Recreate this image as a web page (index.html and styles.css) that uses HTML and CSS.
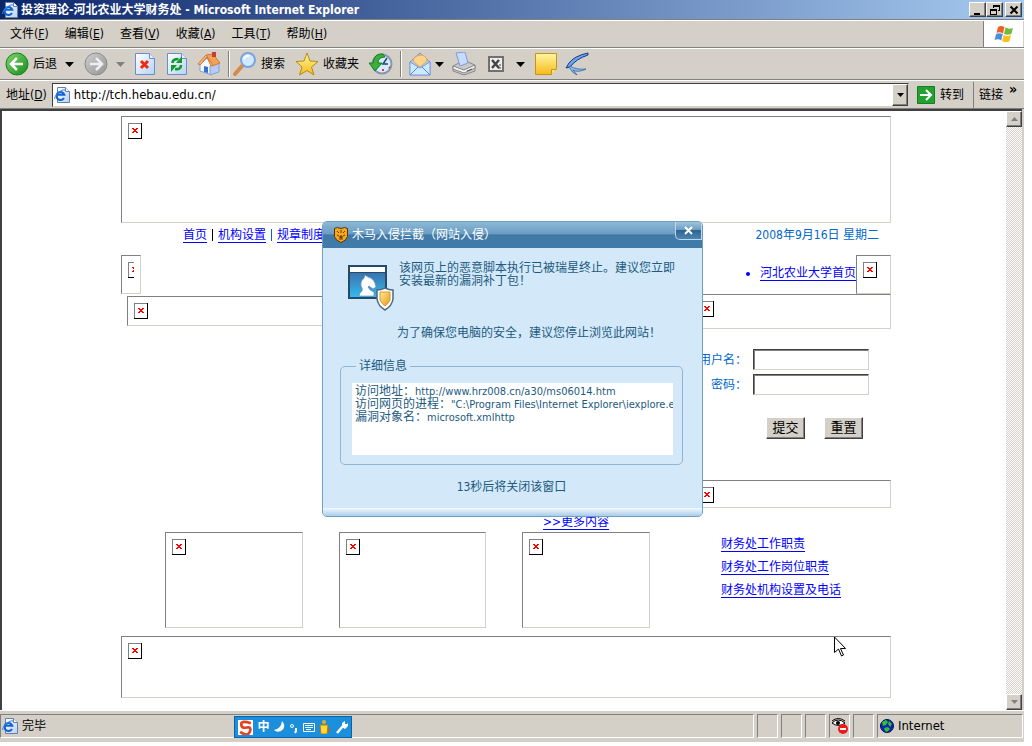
FILE: index.html
```
<!DOCTYPE html>
<html lang="zh-CN">
<head>
  <meta charset="UTF-8">
  <meta name="viewport" content="width=device-width, initial-scale=1.0">
  <title>投资理论-河北农业大学财务处</title>
  <link rel="stylesheet" href="styles.css">
</head>
<body>
  <svg class="defs" width="0" height="0" aria-hidden="true">
    <defs>
      <linearGradient id="green" x1="0" y1="0" x2="1" y2="1"><stop offset="0" stop-color="#7ed86a"/><stop offset="1" stop-color="#178a1c"/></linearGradient>
      <linearGradient id="grey" x1="0" y1="0" x2="1" y2="1"><stop offset="0" stop-color="#cfcfcf"/><stop offset="1" stop-color="#939393"/></linearGradient>
      <linearGradient id="gold" x1="0" y1="0" x2="0" y2="1"><stop offset="0" stop-color="#fff6a0"/><stop offset="1" stop-color="#f5bb1a"/></linearGradient>
      <linearGradient id="amber" x1="0" y1="0" x2="1" y2="1"><stop offset="0" stop-color="#ffe9a0"/><stop offset="1" stop-color="#e59a10"/></linearGradient>
      <linearGradient id="paper" x1="0" y1="0" x2="1" y2="1"><stop offset="0" stop-color="#ffffff"/><stop offset="1" stop-color="#b5d2f8"/></linearGradient>
      <linearGradient id="sky" x1="0" y1="0" x2="0" y2="1"><stop offset="0" stop-color="#3b5f9c"/><stop offset="1" stop-color="#35bdf0"/></linearGradient>
    </defs>
    <symbol id="ie" viewBox="0 0 16 16">
      <path d="M3.500 .5h8l4 4v11h-12z" fill="url(#paper)" stroke="#6a7fa8"/>
      <path d="M11.500 .5v4h4" fill="#fff" stroke="#6a7fa8"/>
      <path d="M10 11a4 4 0 1 1 .3-3.300H3" fill="none" stroke="#1560d4" stroke-width="2"/>
      <path d="M.8 12C-.5 9 8 1.500 11 3" fill="none" stroke="#2a8ce8"/>
    </symbol>
    <symbol id="broken" viewBox="0 0 14 16">
      <path d="M0 0h14v16H0z" fill="#000"/>
      <path d="M0 0h13v15H0z" fill="#808080"/>
      <path d="M1 1h12v14H1z" fill="#fff"/>
      <path d="M4 5h2v1h2V5h2v1H9v1H8v1h1v1h1v1H8V9H6v1H4V9h1V8h1V7H5V6H4z" fill="#f00"/>
    </symbol>
  </svg>

  <div class="window">
    <header class="titlebar">
      <svg class="icon16"><use href="#ie"/></svg>
      <h1>投资理论-河北农业大学财务处 - Microsoft Internet Explorer</h1>
      <button class="caption" aria-label="最小化"><svg width="10" height="10"><path d="M1 8h6v2H1z"/></svg></button>
      <button class="caption" aria-label="还原"><svg width="10" height="10"><path d="M3 0h7v6H8V5h1V2H4v1H3zM0 4h7v6H0zM1 6v3h5V6z" fill-rule="evenodd"/></svg></button>
      <button class="caption close" aria-label="关闭"><svg width="10" height="10"><path d="M1.500 1.500l7 7M8.500 1.500l-7 7" stroke="#000" stroke-width="2"/></svg></button>
    </header>

    <nav class="menubar">
      <button>文件(<u>F</u>)</button>
      <button>编辑(<u>E</u>)</button>
      <button>查看(<u>V</u>)</button>
      <button>收藏(<u>A</u>)</button>
      <button>工具(<u>T</u>)</button>
      <button>帮助(<u>H</u>)</button>
      <span class="flag">
        <svg width="22" height="20" viewBox="0 0 22 20">
          <path d="M5 3q3-2 6.500 0l-1.500 6.500q-3.500-2-6.500-.5z" fill="#f0602a"/>
          <path d="M12.500 3.500q3.500 2 7.500.5l-1.700 6q-4 1.500-7.300-.3z" fill="#72bb3a"/>
          <path d="M3.200 10q3-1.500 6.500 0l-1.500 6.500q-3-2-6.700-.5z" fill="#4a8ee0"/>
          <path d="M10.700 11q3.500 1.800 7.300.3l-1.600 6.200q-4 1.500-7.300-.6z" fill="#fbbf1e"/>
        </svg>
      </span>
    </nav>

    <div class="toolbar">
      <button class="tool back">
        <svg width="24" height="24" viewBox="0 0 24 24"><circle cx="12" cy="12" r="11" fill="url(#green)" stroke="#1d7d22"/><path d="M18 12H7M12 6l-6 6 6 6" fill="none" stroke="#fff" stroke-width="2.600"/></svg>
        <span>后退</span>
      </button>
      <button class="tool drop" aria-label="后退列表"><svg width="9" height="5"><path d="M0 0h9L4.500 5z"/></svg></button>
      <button class="tool forward" aria-label="前进"><svg width="24" height="24" viewBox="0 0 24 24"><circle cx="12" cy="12" r="11" fill="url(#grey)" stroke="#8c8c8c"/><path d="M6 12h11M12 6l6 6-6 6" fill="none" stroke="#eee" stroke-width="2.600"/></svg></button>
      <button class="tool drop" aria-label="前进列表"><svg width="9" height="5"><path d="M0 0h9L4.500 5z" fill="#808080"/></svg></button>
      <button class="tool" aria-label="停止"><svg width="20" height="24" viewBox="0 0 20 24"><path d="M.5 1.500h14l5 5v16H.5z" fill="url(#paper)" stroke="#6c8cd0"/><path d="M14.500 1.500v5h5" fill="#e8f1ff" stroke="#6c8cd0"/><path d="M6 9l7 7M13 9l-7 7" stroke="#f02a10" stroke-width="3"/></svg></button>
      <button class="tool refresh" aria-label="刷新"><svg width="20" height="24" viewBox="0 0 20 24"><path d="M.5 1.500h14l5 5v16H.5z" fill="url(#paper)" stroke="#6c8cd0"/><path d="M14.500 1.500v5h5" fill="#e8f1ff" stroke="#6c8cd0"/><path d="M5.500 11q0-4 6-4M14 13q0 5-6 4" fill="none" stroke="#149a2a" stroke-width="2.600"/><path d="M9 11h6V4zM10 13H4v7z" fill="#149a2a"/></svg></button>
      <button class="tool" aria-label="主页"><svg width="24" height="24" viewBox="0 0 24 24"><path d="M3 13l7-7 5 8v9l-12-4z" fill="#f4f8ff" stroke="#8aa0d0"/><path d="M13 14l9-3v9l-9 3z" fill="#b4ccf6" stroke="#8aa0d0"/><path d="M7 14l4 1v6l-4-1z" fill="#3a6fd0"/><path d="M9 3l7-1 7 9-8 3z" fill="#f2a35a" stroke="#d47a35"/><path d="M9 3L1 12l2 1 7-8 4 9 2-1z" fill="#f7b877" stroke="#d47a35"/><path d="M15 0h4v5h-4z" fill="#c8402a"/></svg></button>
      <span class="sep"></span>
      <button class="tool search">
        <svg width="24" height="24" viewBox="0 0 24 24"><path d="M2 22l8-9" stroke="#d58a4a" stroke-width="4" stroke-linecap="round"/><circle cx="15" cy="8" r="7" fill="#cfeaff" stroke="#7da2dc" stroke-width="2"/><path d="M11 7q1-4 5-3" fill="none" stroke="#fff" stroke-width="2"/></svg>
        <span>搜索</span>
      </button>
      <button class="tool favorites">
        <svg width="24" height="24" viewBox="0 0 24 24"><path d="M12 1l3 8 8 .5-6.500 5.500 2.500 8-7-4.500L4.500 23 7 15 1 9.500 9 9z" fill="url(#gold)" stroke="#b98a10"/></svg>
        <span>收藏夹</span>
      </button>
      <button class="tool" aria-label="历史"><svg width="24" height="24" viewBox="0 0 24 24"><circle cx="13" cy="12" r="9.500" fill="#d4ecff" stroke="#8796ae" stroke-width="2"/><path d="M18 6l-4 6h5" fill="none" stroke="#246" stroke-width="1.500"/><path d="M14 17v2M20 15l1 1" stroke="#e04020" stroke-width="2"/><path d="M14 2Q5 1 4 11H0l6 8 7-8H9q0-6 7-6z" fill="#3cae3c" stroke="#187a20"/></svg></button>
      <span class="sep"></span>
      <button class="tool" aria-label="邮件"><svg width="22" height="24" viewBox="0 0 22 24"><path d="M1 10L11 1l10 9v13H1z" fill="#a9c8f8" stroke="#7d8fd8"/><path d="M4 9q1-5 8-6 6 1 6 6l-7 6z" fill="#fbd58a" stroke="#e5a850"/><path d="M1 10l10 6 10-6v13H1z" fill="#cce9ff" stroke="#7d9edc"/><path d="M1 23l8-8M21 23l-8-8" stroke="#5c88cf"/></svg></button>
      <button class="tool drop near" aria-label="邮件列表"><svg width="9" height="5"><path d="M0 0h9L4.500 5z"/></svg></button>
      <button class="tool print" aria-label="打印"><svg width="24" height="24" viewBox="0 0 24 24"><path d="M1 14l6-3 9-1 7 3v6l-11 4-11-4z" fill="#c8c8c8" stroke="#888"/><path d="M4 1l9-1 3 11-8 3z" fill="#c5dcff" stroke="#809bdc"/><path d="M1 14l11 4 11-5v3l-11 5-11-4z" fill="#f4f4f4" stroke="#888"/><path d="M15 19l5-2" stroke="#555"/></svg></button>
      <button class="tool excel" aria-label="用 Excel 编辑"><svg width="16" height="16" viewBox="0 0 16 16"><path d="M1 1h14v14H1z" fill="#eee" stroke="#707070" stroke-width="2"/><path d="M4 4l7 8M11 4l-7 8" stroke="#444" stroke-width="2.500"/><path d="M10 12h3M11 9h2" stroke="#444"/></svg></button>
      <button class="tool drop" aria-label="编辑列表"><svg width="9" height="5"><path d="M0 0h9L4.500 5z"/></svg></button>
      <button class="tool" aria-label="便笺"><svg width="22" height="24" viewBox="0 0 22 24"><path d="M.5 1.500h21v15l-5 6H.5z" fill="url(#gold)" stroke="#c99410"/><path d="M16.500 22.500v-5h5" fill="#ffe57a" stroke="#c99410"/></svg></button>
      <button class="tool bird" aria-label="迅雷"><svg width="24" height="24" viewBox="0 0 24 24"><path d="M23 1Q9 4 4 11l-3 5 4-1q6-8 18-12z" fill="#6aa4ea" stroke="#173a80"/><path d="M5 14q6 4 16 3-8 4-13 1l4 5q-5-2-8-8z" fill="#8dbcee" stroke="#2a559c" stroke-width=".7"/></svg></button>
    </div>

    <form class="addressbar">
      <label for="url">地址(<u>D</u>)</label>
      <span class="urlbox">
        <svg class="icon16"><use href="#ie"/></svg>
        <input id="url" type="text" value="http://tch.hebau.edu.cn/">
        <button type="button" class="raised" aria-label="地址列表"><svg width="7" height="4"><path d="M0 0h7L3.500 4z"/></svg></button>
      </span>
      <button type="button" class="go">
        <svg width="18" height="18" viewBox="0 0 18 18"><path d="M.5 .5h17v17H.5z" fill="#22a030" stroke="#128020"/><path d="M3 9h10M9 4l5 5-5 5" fill="none" stroke="#fff" stroke-width="2"/></svg>
        <span>转到</span>
      </button>
      <span class="links">链接 <b>»</b></span>
    </form>

    <div class="viewport">
      <main class="page">
        <div class="img banner"><svg><use href="#broken"/></svg></div>

        <div class="nav">
          <a href="#">首页</a><i></i><a href="#">机构设置</a><i class="blue"></i><a href="#">规章制度</a>
          <time>2008年9月16日 星期二</time>
        </div>

        <div class="columns">
          <section class="left">
            <div class="img tiny"><svg><use href="#broken"/></svg></div>
            <div class="img news-head"><svg><use href="#broken"/></svg></div>
            <a class="more" href="#">&gt;&gt;更多内容</a>
            <div class="thumbs">
              <div class="img thumb"><svg><use href="#broken"/></svg></div>
              <div class="img thumb wide"><svg><use href="#broken"/></svg></div>
              <div class="img thumb narrow"><svg><use href="#broken"/></svg></div>
            </div>
          </section>

          <section class="right">
            <div class="home">
              <ul><li><a href="#">河北农业大学首页</a></li></ul>
              <div class="img"><svg><use href="#broken"/></svg></div>
            </div>
            <div class="img login-head"><svg><use href="#broken"/></svg></div>
            <form class="login">
              <label for="user">用户名：</label><input id="user" type="text">
              <label for="pass">密码：</label><input id="pass" type="password">
              <div class="buttons">
                <button type="button">提交</button>
                <button type="button">重置</button>
              </div>
            </form>
            <div class="img duty-head"><svg><use href="#broken"/></svg></div>
            <div class="duties">
              <a href="#">财务处工作职责</a>
              <a href="#">财务处工作岗位职责</a>
              <a href="#">财务处机构设置及电话</a>
            </div>
          </section>
        </div>

        <div class="img footer"><svg><use href="#broken"/></svg></div>
      </main>
      <div class="scrollbar">
        <button class="raised" aria-label="向上"><svg width="7" height="4"><path d="M0 4h7L3.500 0z" fill="#808080"/></svg></button>
        <button class="raised" aria-label="向下"><svg width="7" height="4"><path d="M0 0h7L3.500 4z" fill="#808080"/></svg></button>
      </div>
    </div>

    <footer class="statusbar">
      <span class="pane done"><svg class="icon16"><use href="#ie"/></svg>完毕</span>
      <span class="pane"></span>
      <span class="pane"></span>
      <span class="pane"></span>
      <span class="pane"><svg width="18" height="18" viewBox="0 0 18 18"><path d="M1 6q6-6 13 0-6 5-13 0z" fill="#fff" stroke="#000"/><path d="M1 4q6-5 13 0" fill="none" stroke="#000"/><circle cx="7" cy="6" r="2"/><circle cx="12" cy="12" r="5" fill="#f01818"/><path d="M9 12h6" stroke="#fff" stroke-width="2"/></svg></span>
      <span class="pane"></span>
      <span class="pane zone"><svg width="14" height="14" viewBox="0 0 14 14"><circle cx="7" cy="7" r="6.500" fill="#1020b8" stroke="#001050"/><path d="M2 3l4-2 2 2-2 3-3 1zM9 2l3 3-2 3-2-3zM4 9l4-1 2 2-3 3-2-1z" fill="#30c030"/></svg>Internet</span>
    </footer>
  </div>

  <div class="dialog" role="dialog" aria-labelledby="alert-title">
    <div class="dialog-title">
      <svg width="14" height="16" viewBox="0 0 14 16"><path d="M.5 1.500l3-1 3.500 1 3.500-1 3 1v8q-1 4-6.500 6-5.500-2-6.500-6z" fill="#f5a81c" stroke="#5a3208"/><path d="M3 4l2 2M11 4L9 6M3 8l2 1M11 8L9 9M7 3v3M5 12h4M6 9h2v2H6z" stroke="#6a3a08" fill="#6a3a08"/></svg>
      <h2 id="alert-title">木马入侵拦截（网站入侵）</h2>
      <button aria-label="关闭"><svg width="9" height="9"><path d="M1 1l7 7M8 1L1 8" stroke="#fff" stroke-width="2"/></svg></button>
    </div>
    <div class="dialog-body">
      <div class="alert">
        <svg width="48" height="48" viewBox="0 0 48 48">
          <path d="M2 2h37v32H2z" fill="url(#sky)" stroke="#274a68" stroke-width="2"/>
          <path d="M3 3h35v5H3z" fill="#fff"/><path d="M3 8.500h35" stroke="#274a68"/>
          <path d="M12 32q0-3 3-5 1-2-1-5-1-5 3-8l1-3 3 2q5 1 7 6l1 4-3 2-4-3-1 1q2 4 6 5v4z" fill="#fff" stroke="#5a7f9e" stroke-width=".6"/>
          <path d="M30 26q4 0 8-2 4 2 8 2v9q-1 7-8 11-7-4-8-11z" fill="#fff" stroke="#506880" stroke-width="1.500"/>
          <path d="M33 28h10v8q-2 4-5 6-3-2-5-6z" fill="url(#amber)" stroke="#d59a20"/>
        </svg>
        <p>该网页上的恶意脚本执行已被瑞星终止。建议您立即安装最新的漏洞补丁包！</p>
      </div>
      <p class="advice">为了确保您电脑的安全，建议您停止浏览此网站！</p>
      <fieldset>
        <legend>详细信息</legend>
        <dl class="details">
          <div><dt>访问地址：</dt><dd>http://www.hrz008.cn/a30/ms06014.htm</dd></div>
          <div><dt>访问网页的进程：</dt><dd>"C:\Program Files\Internet Explorer\iexplore.e</dd></div>
          <div><dt>漏洞对象名：</dt><dd>microsoft.xmlhttp</dd></div>
        </dl>
      </fieldset>
      <p class="countdown">13秒后将关闭该窗口</p>
    </div>
  </div>

  <div class="ime">
    <svg width="15" height="15" viewBox="0 0 14 14"><path d="M0 0h14v14H0z" fill="#fff"/><path d="M12 3Q3 0 3 4t5 3 3 4-9 0" fill="none" stroke="#e8401c" stroke-width="2.500"/></svg>
    <b>中</b>
    <svg width="12" height="14" viewBox="0 0 12 14"><path d="M8 1q5 6-1 10-4 2-7-1 7-1 8-9z" fill="#fff"/></svg>
    <svg width="8" height="14" viewBox="0 0 8 14"><circle cx="2" cy="6" r="1.500" fill="none" stroke="#fff"/><path d="M6 8v3l-1 2" fill="none" stroke="#fff" stroke-width="2"/></svg>
    <svg width="12" height="14" viewBox="0 0 12 14"><path d="M.5 3.500h11v8H.5zM2 5.500h8M2 7.500h8M3 9.500h5" fill="none" stroke="#fff"/></svg>
    <svg width="12" height="14" viewBox="0 0 12 14"><path d="M8 12l3-3" stroke="#a66a20" stroke-width="2"/><circle cx="5" cy="2" r="2" fill="#e8b020"/><path d="M1 5h8l-1 9H2z" fill="#ffd83a" stroke="#b87d10"/></svg>
    <svg width="12" height="14" viewBox="0 0 12 14"><path d="M1 13l6-7" stroke="#fff" stroke-width="2.500"/><path d="M6 3l3-2v3h2l1-1v3L9 9 6 7z" fill="#fff"/></svg>
  </div>

  <svg class="cursor" width="12" height="21" viewBox="0 0 12 21"><path d="M.5 1v15.500l4-3.500 3 7 2-1-3-6.500h5z" fill="#fff" stroke="#000"/></svg>
</body>
</html>
```
FILE: styles.css
```
* {
  box-sizing: border-box;
}
body {
  margin: 0;
  height: 100vh;
  padding: 0 8px 4px 0;
  background: #fff;
  color: #000;
  font: 12px/16px "DejaVu Sans Condensed", "Noto Sans CJK SC", sans-serif;
  overflow: hidden;
}
h1, h2, p, ul, dl, dd {
  margin: 0;
  padding: 0;
  font-size: 12px;
}
button, input {
  font: inherit;
  color: inherit;
  padding: 0;
  border: none;
  background: none;
}
svg {
  display: block;
  flex: none;
}
a {
  color: #00f;
  text-underline-offset: 3px;
}
.defs {
  position: absolute;
}
.icon16 {
  width: 16px;
  height: 16px;
}
.window {
  display: flex;
  flex-direction: column;
  height: 100%;
  background: #d4d0c8;
}

/* Title bar */
.titlebar {
  display: flex;
  align-items: center;
  height: 19px;
  padding: 0 2px;
  background: linear-gradient(to right, #0a246a, #a6caf0);
  color: #fff;
}
.titlebar h1 {
  flex: 1;
  margin-left: 3px;
}
.caption, .raised {
  display: flex;
  align-items: center;
  justify-content: center;
  background: #d4d0c8;
  border: 1px solid;
  border-color: #fff #404040 #404040 #fff;
  box-shadow: inset -1px -1px #808080;
}
.caption {
  width: 17px;
  height: 15px;
}
.close {
  margin-left: 2px;
}

/* Menu, toolbar and address bar */
.menubar {
  display: flex;
  align-items: center;
  height: 29px;
  padding-left: 10px;
  gap: 16px;
  border-top: 1px solid #808080;
  border-bottom: 1px solid #808080;
  box-shadow: inset 0 1px #fff;
}
.flag {
  display: flex;
  align-items: center;
  justify-content: center;
  align-self: stretch;
  width: 40px;
  margin: 1px 1px 0 auto;
  background: #fff;
  border-left: 1px solid #808080;
}
.toolbar {
  display: flex;
  align-items: center;
  height: 32px;
  padding-left: 5px;
  gap: 10px;
  border-top: 1px solid #fff;
  border-bottom: 1px solid #808080;
}
.tool {
  display: flex;
  align-items: center;
  gap: 4px;
}
.drop {
  margin-left: -2px;
}
.refresh {
  margin-left: 2px;
}
.near {
  margin-left: -6px;
}
.print {
  margin-left: -2px;
}
.excel {
  margin: 0 4px 0 2px;
}
.search {
  margin: 0 2px 0 -4px;
}
.favorites {
  margin-left: -2px;
}
.bird {
  margin-left: -2px;
}
.sep {
  width: 2px;
  height: 26px;
  margin: 0 -3px;
  border-left: 1px solid #808080;
  border-right: 1px solid #fff;
}
.addressbar {
  display: flex;
  align-items: center;
  height: 29px;
  padding-left: 6px;
  border-top: 1px solid #fff;
  border-bottom: 1px solid #808080;
}
.urlbox {
  display: flex;
  align-items: center;
  flex: 1;
  height: 24px;
  margin-left: 5px;
  padding: 0 0 0 1px;
  background: #fff;
  border: 1px solid;
  border-color: #404040 #d4d0c8 #d4d0c8 #404040;
}
.urlbox input {
  flex: 1;
  margin-left: 4px;
  font-size: 13px;
}
.urlbox .raised {
  width: 16px;
  height: 22px;
}
.go {
  display: flex;
  align-items: center;
  gap: 5px;
  width: 64px;
  padding-left: 8px;
}
.links {
  display: flex;
  align-items: center;
  gap: 6px;
  width: 51px;
  height: 26px;
  padding-left: 5px;
  border-left: 1px solid #808080;
}
.links b {
  align-self: flex-start;
  font-size: 14px;
  line-height: 14px;
}

/* Web page */
.viewport {
  display: flex;
  flex: 1;
  min-height: 0;
  margin-right: 2px;
  background: #fff;
  border-top: 2px solid #404040;
  border-left: 2px solid #404040;
}
.scrollbar {
  display: flex;
  flex-direction: column;
  justify-content: space-between;
  width: 16px;
  background: repeating-conic-gradient(#fff 0 25%, #d4d0c8 0 50%) 0 0 / 2px 2px;
}
.scrollbar .raised {
  height: 16px;
}
.page {
  width: 774px;
  margin: 0 auto;
  padding: 5px 0 0 4px;
}
.img {
  padding: 6px;
  border: 1px solid;
  border-color: #808080 #d4d0c8 #d4d0c8 #808080;
  overflow: hidden;
}
.img svg {
  width: 14px;
  height: 16px;
}
.banner {
  height: 107px;
}
.nav {
  display: flex;
  align-items: center;
  height: 32px;
  padding: 0 12px 8px 62px;
}
.nav i {
  width: 1px;
  height: 12px;
  margin: 0 5px;
  background: #000;
}
.nav i.blue {
  background: #06c;
}
.nav time {
  margin-left: auto;
  color: #06c;
}
.columns {
  display: grid;
  grid-template-columns: 1fr 198px;
}
.left {
  display: flex;
  flex-direction: column;
}
.tiny {
  width: 20px;
  height: 39px;
}
.tiny svg {
  clip-path: inset(0 8px 0 0);
}
.news-head {
  height: 30px;
  margin: 2px 6px 0;
}
.more {
  align-self: flex-start;
  margin: auto 0 2px 422px;
}
.thumbs {
  display: flex;
  gap: 36px;
  padding-left: 44px;
  margin-bottom: 8px;
}
.thumb {
  width: 138px;
  height: 96px;
}
.wide {
  width: 147px;
}
.narrow {
  width: 128px;
}
.home {
  display: flex;
  justify-content: flex-end;
  height: 39px;
}
.home ul {
  padding-top: 10px;
  color: #00f;
}
.home .img {
  width: 35px;
}
.login-head {
  height: 35px;
}
.login {
  display: grid;
  grid-template-columns: 54px 116px;
  column-gap: 6px;
  row-gap: 4px;
  align-items: center;
  padding-top: 20px;
  height: 151px;
  align-content: start;
}
.login label {
  color: #06c;
  text-align: right;
  white-space: nowrap;
}
.login input {
  width: 116px;
  height: 21px;
  border: 1px solid;
  border-color: #404040 #d4d0c8 #d4d0c8 #404040;
  box-shadow: inset 1px 1px #808080;
}
.buttons {
  display: flex;
  gap: 19px;
  grid-column: 1 / 3;
  margin: 18px 0 0 73px;
}
.buttons button {
  width: 39px;
  height: 22px;
  font-size: 13px;
  background: #d4d0c8;
  border: 1px solid;
  border-color: #fff #404040 #404040 #fff;
  box-shadow: inset -1px -1px #808080;
}
.duty-head {
  height: 28px;
}
.duties {
  display: flex;
  flex-direction: column;
  align-items: flex-start;
  gap: 7px;
  padding: 28px 0 38px 28px;
}
.footer {
  height: 62px;
}

/* Status bar */
.statusbar {
  display: flex;
  gap: 3px;
  height: 32px;
  padding: 3px 1px 4px 0;
  border-top: 1px solid #fff;
}
.pane {
  display: flex;
  align-items: center;
  justify-content: center;
  width: 21px;
  border: 1px solid;
  border-color: #808080 #fff #fff #808080;
}
.done {
  flex: 1;
  justify-content: flex-start;
  gap: 4px;
  padding-left: 1px;
}
.zone {
  width: 146px;
  justify-content: flex-start;
  gap: 4px;
  padding-left: 2px;
  font-size: 13px;
}

/* Alert window */
.dialog {
  position: absolute;
  top: 221px;
  left: 322px;
  width: 381px;
  background: #d3e9f9;
  border: 1px solid #6f9fc4;
  border-radius: 5px;
  color: #1c5a80;
  line-height: 13px;
  overflow: hidden;
}
.dialog-title {
  display: flex;
  align-items: center;
  height: 26px;
  padding-left: 11px;
  gap: 4px;
  background: linear-gradient(#8db8d6, #6a9dc3 45%, #4179a6 50%, #3f7bab);
  color: #fff;
}
.dialog-title h2 {
  flex: 1;
  font-weight: normal;
}
.dialog-title button {
  display: flex;
  align-items: center;
  justify-content: center;
  align-self: flex-start;
  width: 27px;
  height: 18px;
  background: linear-gradient(#9fc3dc, #6c9fc4 45%, #2f6590 50%, #4a86b3);
  border: 1px solid #bcd8ea;
  border-top: none;
  border-radius: 0 0 0 5px;
}
.dialog-body {
  padding: 14px 19px 0 17px;
}
.dialog::after {
  content: "";
  display: block;
  height: 8px;
  background: linear-gradient(#f2faff, #a9cce8);
}
.alert {
  display: flex;
  gap: 4px;
  padding-left: 7px;
}
.alert svg {
  margin-top: 2px;
}
.advice {
  padding: 15px 0 0 57px;
}
fieldset {
  margin: 20px 0 0;
  padding: 10px 9px 9px 11px;
  border: 1px solid #8fb4d4;
  border-radius: 5px;
  min-width: 0;
}
legend {
  margin-left: 4px;
  padding: 0 3px;
}
.details {
  height: 72px;
  padding: 2px 3px;
  background: #fff;
  white-space: nowrap;
  overflow: hidden;
}
.details div {
  display: flex;
}
.details dd {
  font-size: 11px;
}
.countdown {
  padding: 16px 0 14px;
  text-align: center;
}

/* Input method bar */
.ime {
  position: absolute;
  left: 234px;
  bottom: 8px;
  display: flex;
  align-items: center;
  justify-content: space-between;
  width: 118px;
  height: 22px;
  padding: 0 3px;
  background: #1b8fdc;
  border: 1px solid #0c62a8;
  color: #fff;
}
.cursor {
  position: absolute;
  left: 834px;
  top: 636px;
}
```
